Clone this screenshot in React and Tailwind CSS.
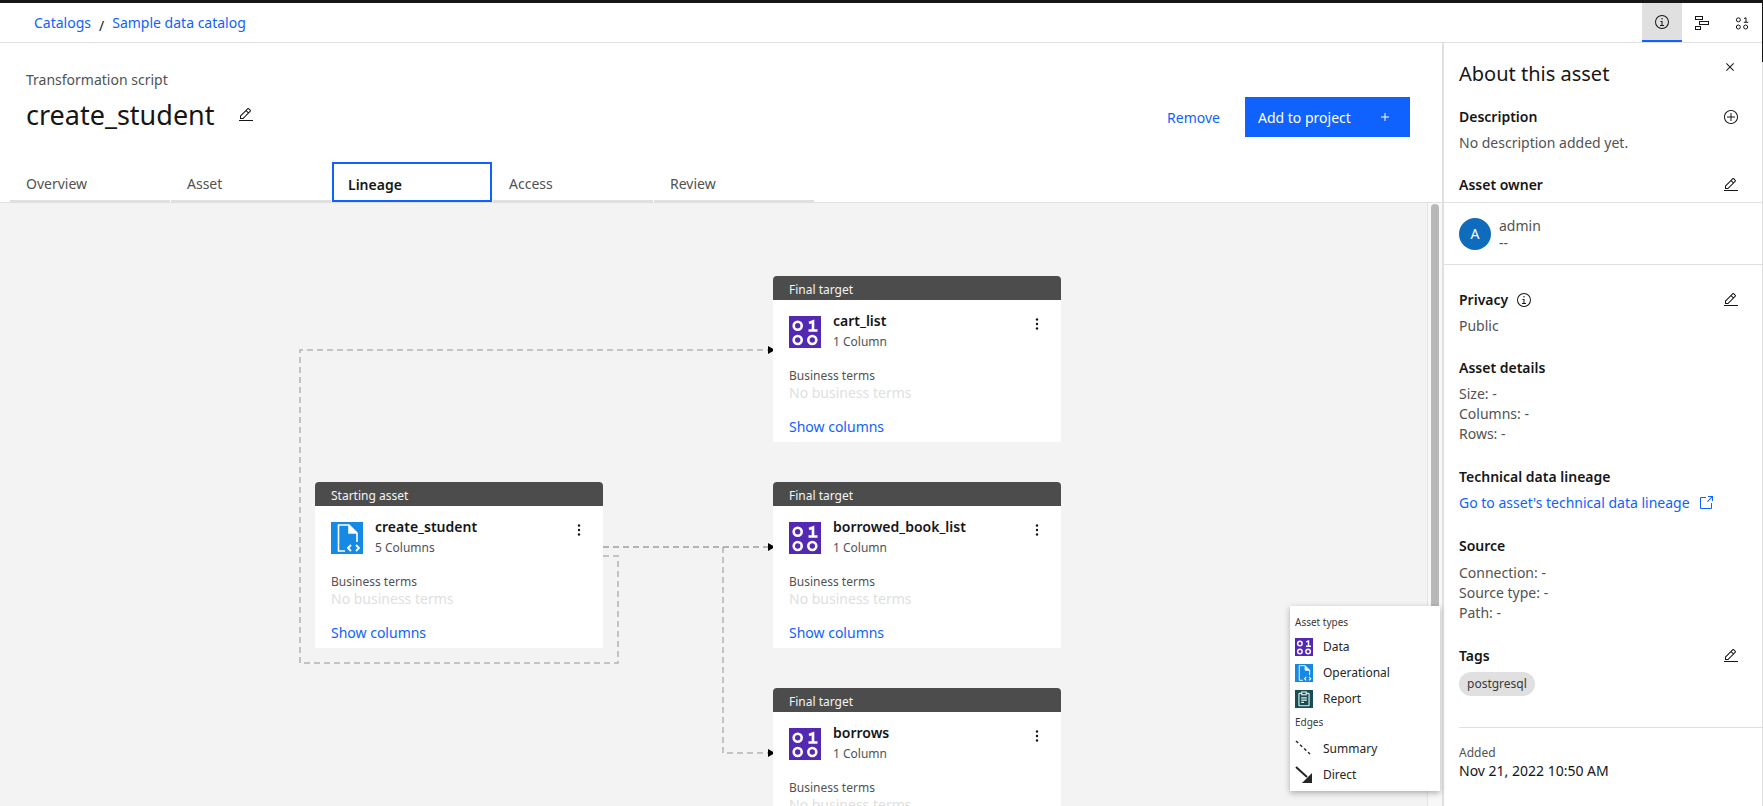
const font = { fontFamily: '"Noto Sans", sans-serif' };

const Carbon = ({ size = 16, className = "", children }) => (
	<svg
		width={size}
		height={size}
		viewBox="0 0 32 32"
		fill="currentColor"
		className={`shrink-0 ${className}`}>
		{children}
	</svg>
);

const EditIcon = ({ size = 16 }) => (
	<Carbon size={size} className="text-[#161616]">
		<path d="M2 26H30V28H2zM25.4 9c.8-.8.8-2 0-2.8 0 0 0 0 0 0l-3.6-3.6c-.8-.8-2-.8-2.8 0 0 0 0 0 0 0l-15 15V24h6.4L25.4 9zM20.4 4L24 7.6l-3 3L17.4 7 20.4 4zM6 22v-3.6l10-10 3.6 3.6-10 10H6z" />
	</Carbon>
);

const InfoIcon = ({ size = 16 }) => (
	<Carbon size={size} className="text-[#161616]">
		<path d="M17 22v-8h-4v2h2v6h-3v2h8v-2zM16 8a1.5 1.5 0 1 0 1.5 1.5A1.5 1.5 0 0 0 16 8z" />
		<path d="M16 30a14 14 0 1 1 14-14A14 14 0 0 1 16 30zm0-26a12 12 0 1 0 12 12A12 12 0 0 0 16 4z" />
	</Carbon>
);

const DataGlyph = ({ stroke = "#fff", width = 2.6 }) => (
	<g fill="none" stroke={stroke} strokeWidth={width}>
		<circle cx="8.7" cy="9.7" r="4" />
		<circle cx="8.7" cy="24" r="4" />
		<circle cx="23.3" cy="24" r="4" />
		<path d="M20 7 L24 5.5 V14.5 M19.5 14.5 H28.5" />
	</g>
);

const DataIcon = ({ size = 32 }) => (
	<svg width={size} height={size} viewBox="0 0 32 32" className="shrink-0">
		<rect width="32" height="32" fill="#5329b1" />
		<DataGlyph />
	</svg>
);

const ScriptIcon = ({ size = 32 }) => (
	<svg width={size} height={size} viewBox="0 0 32 32" className="shrink-0">
		<rect width="32" height="32" fill="#1689e4" />
		<g fill="none" stroke="#fff" strokeWidth="1.6">
			<path d="M14 29 H7.5 V3 H18 L26 11 V20" />
			<path d="M18 3 V11 H26" fill="#fff" />
			<path d="M20 23 L17 26 L20 29 M25 23 L28 26 L25 29" strokeWidth="1.8" />
		</g>
	</svg>
);

const ReportIcon = ({ size = 18 }) => (
	<svg width={size} height={size} viewBox="0 0 32 32" className="shrink-0">
		<rect width="32" height="32" fill="#174f54" />
		<g fill="none" stroke="#e6f0ef" strokeWidth="2">
			<rect x="7" y="6" width="18" height="22" rx="1" />
			<rect x="12" y="3.5" width="8" height="5" fill="#174f54" />
			<path d="M11 14 H21 M11 18 H21 M11 22 H16" />
		</g>
	</svg>
);

const Kebab = () => (
	<svg width="16" height="16" viewBox="0 0 16 16" fill="#161616" className="shrink-0">
		<circle cx="8" cy="3.5" r="1.2" />
		<circle cx="8" cy="8" r="1.2" />
		<circle cx="8" cy="12.5" r="1.2" />
	</svg>
);

const cards = [
	{ label: "Starting asset", name: "create_student", sub: "5 Columns", pos: "left-[315px] top-[279px]", script: true },
	{ label: "Final target", name: "cart_list", sub: "1 Column", pos: "left-[773px] top-[73px]" },
	{ label: "Final target", name: "borrowed_book_list", sub: "1 Column", pos: "left-[773px] top-[279px]" },
	{ label: "Final target", name: "borrows", sub: "1 Column", pos: "left-[773px] top-[485px]" },
];

function AssetCard({ card }) {
	return (
		<div className={`absolute w-[288px] h-[166px] bg-white rounded-t ${card.pos}`}>
			<div className="h-6 bg-[#4c4c4c] rounded-t px-4 pt-1 flex items-center text-xs text-[#f4f4f4]">
				{card.label}
			</div>
			<div className="flex px-4 pt-4">
				{card.script ? <ScriptIcon /> : <DataIcon />}
				<div className="ml-3 flex-1">
					<div className="text-sm leading-[18px] -mt-1 font-semibold text-[#161616]">{card.name}</div>
					<div className="text-xs leading-4 mt-1 text-[#525252]">{card.sub}</div>
				</div>
				<Kebab />
			</div>
			<div className="px-4 mt-[18px] text-xs leading-4 text-[#525252]">Business terms</div>
			<div className="px-4 text-sm leading-[18px] text-[#e0e0e0]">No business terms</div>
			<div className="px-4 mt-[16px] text-sm leading-[18px] text-[#0f62fe]">Show columns</div>
		</div>
	);
}

function LineageEdges() {
	return (
		<svg className="absolute inset-0 w-full h-full" fill="none">
			<g stroke="#b4b4b4" strokeWidth="1.5" strokeDasharray="6 4">
				<path d="M603 353 H618 V460 H300 V147 H768" />
				<path d="M723 344 V550 H770" />
			</g>
			<path d="M603 344 H768" stroke="#a0a0a0" strokeWidth="1.5" strokeDasharray="6 4" />
			<path d="M768 143 L775 147 L768 151Z M768 340 L775 344 L768 348Z M768 546 L775 550 L768 554Z" fill="#000" />
		</svg>
	);
}

function Legend() {
	const row = "flex items-center h-[26px] text-xs text-[#262626]";
	return (
		<div className="absolute left-[1290px] top-[403px] w-[150px] h-[185px] bg-white shadow-[0_2px_6px_rgba(0,0,0,0.3)] pl-[5px] pt-[10px]">
			<div className="text-[10px] leading-3 text-[#393939] mb-[6px]">Asset types</div>
			<div className={row}>
				<DataIcon size={18} />
				<span className="ml-[10px]">Data</span>
			</div>
			<div className={row}>
				<ScriptIcon size={18} />
				<span className="ml-[10px]">Operational</span>
			</div>
			<div className={row}>
				<ReportIcon />
				<span className="ml-[10px]">Report</span>
			</div>
			<div className="text-[10px] leading-3 text-[#393939] mt-[4px] mb-[8px]">Edges</div>
			<div className={row}>
				<svg width="18" height="18" viewBox="0 0 18 18" className="shrink-0">
					<path d="M1 1 L15 14" stroke="#262626" strokeWidth="1.5" strokeDasharray="3 2.5" />
				</svg>
				<span className="ml-[10px]">Summary</span>
			</div>
			<div className={row}>
				<svg width="18" height="18" viewBox="0 0 18 18" className="shrink-0">
					<path d="M1 1 L12 11" stroke="#262626" strokeWidth="2" />
					<path d="M17 7 V17 H7Z" fill="#262626" />
				</svg>
				<span className="ml-[10px]">Direct</span>
			</div>
		</div>
	);
}

const tabs = ["Overview", "Asset", "Lineage", "Access", "Review"];

function Section({ title, extra, action, className = "", children }) {
	return (
		<div className={className}>
			<div className="flex items-center justify-between h-[18px] pr-[23px]">
				<div className="flex items-center gap-2 text-sm font-semibold text-[#161616]">
					{title}
					{extra}
				</div>
				{action}
			</div>
			{children}
		</div>
	);
}

export default function App() {
	return (
		<div style={font} className="relative h-screen w-full overflow-hidden bg-white flex flex-col">
			<div className="h-[3px] bg-[#161616] shrink-0" />
			<div className="absolute right-0 top-0 w-px h-[62px] bg-[#161616]" />

			{/* Breadcrumb row */}
			<div className="h-[40px] shrink-0 border-b border-[#e0e0e0] flex items-start justify-between">
				<div className="flex items-center pl-[34px] pt-[8px] text-sm leading-[18px] text-[#0f62fe]">
					<span>Catalogs</span>
					<span className="text-[#161616] mx-2 mt-1.5">/</span>
					<span>Sample data catalog</span>
				</div>
				<div className="flex pr-[1px] h-[39px]">
					<div className="w-[40px] bg-[#e0e0e0] border-b-2 border-[#0f62fe] flex items-center justify-center">
						<InfoIcon />
					</div>
					<div className="w-[40px] flex items-center justify-center">
						<svg width="16" height="16" viewBox="0 0 16 16" fill="none" stroke="#161616">
							<rect x="1.5" y="1.5" width="7" height="3" />
							<rect x="5.5" y="6.5" width="9" height="3" />
							<rect x="1.5" y="11.5" width="5" height="3" />
						</svg>
					</div>
					<div className="w-[40px] flex items-center justify-center">
						<svg width="16" height="16" viewBox="0 0 32 32">
							<DataGlyph stroke="#161616" width={2} />
						</svg>
					</div>
				</div>
			</div>

			<div className="flex-1 flex min-h-0">
				<div className="flex-1 min-w-0 flex flex-col">
					{/* Asset header */}
					<div className="h-[160px] shrink-0 border-b border-[#e0e0e0] relative flex flex-col">
						<div className="pl-[26px] pt-[28px] text-sm leading-[18px] text-[#525252]">Transformation script</div>
						<div className="pl-[26px] mt-2 flex items-center">
							<h1 className="text-[27px] leading-9 text-[#161616] font-normal">create_student</h1>
							<span className="ml-[23px]">
								<EditIcon />
							</span>
						</div>
						<div className="absolute right-[32px] top-[54px] flex items-center">
							<span className="text-sm text-[#0f62fe] mr-[25px] pt-[2px]">Remove</span>
							<div className="w-[165px] h-[40px] bg-[#0f62fe] text-white text-sm flex items-center justify-between pl-[13px] pr-[17px]">
								<span className="pt-[2px]">Add to project</span>
								<Carbon size={16}>
									<path d="M17 15V8h-2v7H8v2h7v7h2v-7h7v-2z" />
								</Carbon>
							</div>
						</div>
						<div className="flex pl-[10px] mt-auto">
							{tabs.map((tab) =>
								tab === "Lineage" ? (
									<div
										key={tab}
										className="w-[160px] h-[40px] mr-px border-2 border-[#0f62fe] flex items-center pl-[14px] pt-1.5 text-sm font-semibold text-[#161616]">
										{tab}
									</div>
								) : (
									<div
										key={tab}
										className="w-[160px] h-[40px] mr-px border-b-2 border-[#e0e0e0] flex items-center pl-4 pt-1.5 text-sm text-[#525252]">
										{tab}
									</div>
								),
							)}
						</div>
					</div>

					{/* Lineage canvas */}
					<div className="flex-1 relative min-h-0">
						<div className="absolute inset-0 bg-[#f3f3f3]" />
						<LineageEdges />
						{cards.map((card) => (
							<AssetCard key={card.name} card={card} />
						))}
						<div className="absolute left-[1427px] top-0 bottom-0 w-[15px] bg-[#f8f8f8] border-l border-[#e4e4e4]">
							<div className="mx-auto mt-px w-[8px] h-[420px] bg-[#b8b8b8] rounded-full" />
						</div>
						<Legend />
					</div>
				</div>

				{/* About this asset */}
				<aside className="w-[321px] shrink-0 border-l-2 border-r border-[#e0e0e0] flex flex-col bg-white">
					<div className="pl-[15px] pt-[19px] h-[160px] border-b border-[#e0e0e0] relative">
						<div className="text-xl leading-6 text-[#161616]">About this asset</div>
						<div className="absolute right-[24px] top-[16px]">
							<Carbon size={16} className="text-[#161616]">
								<path d="M24 9.4L22.6 8 16 14.6 9.4 8 8 9.4 14.6 16 8 22.6 9.4 24 16 17.4 22.6 24 24 22.6 17.4 16 24 9.4z" />
							</Carbon>
						</div>
						<Section
							title="Description"
							className="mt-[22px]"
							action={
								<Carbon size={16} className="text-[#161616]">
									<path d="M16 4c6.6 0 12 5.4 12 12s-5.4 12-12 12S4 22.6 4 16 9.4 4 16 4m0-2C8.3 2 2 8.3 2 16s6.3 14 14 14 14-6.3 14-14S23.7 2 16 2z" />
									<path d="M24 15h-7V8h-2v7H8v2h7v7h2v-7h7z" />
								</Carbon>
							}>
							<div className="mt-2 text-sm leading-[18px] text-[#525252]">No description added yet.</div>
						</Section>
						<Section title="Asset owner" className="mt-[24px]" action={<EditIcon />} />
					</div>

					<div className="h-[62px] border-b border-[#e0e0e0] pl-[15px] flex items-center">
						<div className="w-8 h-8 rounded-full bg-[#0f6cbd] text-white text-sm flex items-center justify-center">A</div>
						<div className="ml-2 text-sm leading-[17px] text-[#525252]">
							<div>admin</div>
							<div>--</div>
						</div>
					</div>

					<div className="pl-[15px] flex-1 min-h-0 flex flex-col">
						<Section title="Privacy" extra={<InfoIcon />} className="mt-[26px]" action={<EditIcon />}>
							<div className="mt-2 text-sm leading-[18px] text-[#525252]">Public</div>
						</Section>
						<Section title="Asset details" className="mt-[24px]">
							<div className="mt-[7px] text-sm leading-5 text-[#525252]">
								<div>Size: -</div>
								<div>Columns: -</div>
								<div>Rows: -</div>
							</div>
						</Section>
						<Section title="Technical data lineage" className="mt-[24px]">
							<div className="mt-2 flex items-center text-sm leading-[18px] text-[#0f62fe]">
								Go to asset's technical data lineage
								<Carbon size={16} className="ml-2">
									<path d="M26 28H6a2 2 0 0 1-2-2V6a2 2 0 0 1 2-2h10v2H6v20h20V16h2v10a2 2 0 0 1-2 2z" />
									<path d="M20 2v2h6.586L18 12.586 19.414 14 28 5.414V12h2V2H20z" />
								</Carbon>
							</div>
						</Section>
						<Section title="Source" className="mt-[25px]">
							<div className="mt-[8px] text-sm leading-5 text-[#525252]">
								<div>Connection: -</div>
								<div>Source type: -</div>
								<div>Path: -</div>
							</div>
						</Section>
						<Section title="Tags" className="mt-[24px]" action={<EditIcon />}>
							<div className="mt-[7px] inline-flex h-6 items-center rounded-full bg-[#e0e0e0] px-2 text-xs text-[#393939]">postgresql</div>
						</Section>
						<div className="mt-[31px] border-t border-[#e0e0e0] pt-[17px]">
							<div className="text-xs leading-4 text-[#525252]">Added</div>
							<div className="text-sm leading-5 text-[#161616]">Nov 21, 2022 10:50 AM</div>
						</div>
					</div>
				</aside>
			</div>
		</div>
	);
}
